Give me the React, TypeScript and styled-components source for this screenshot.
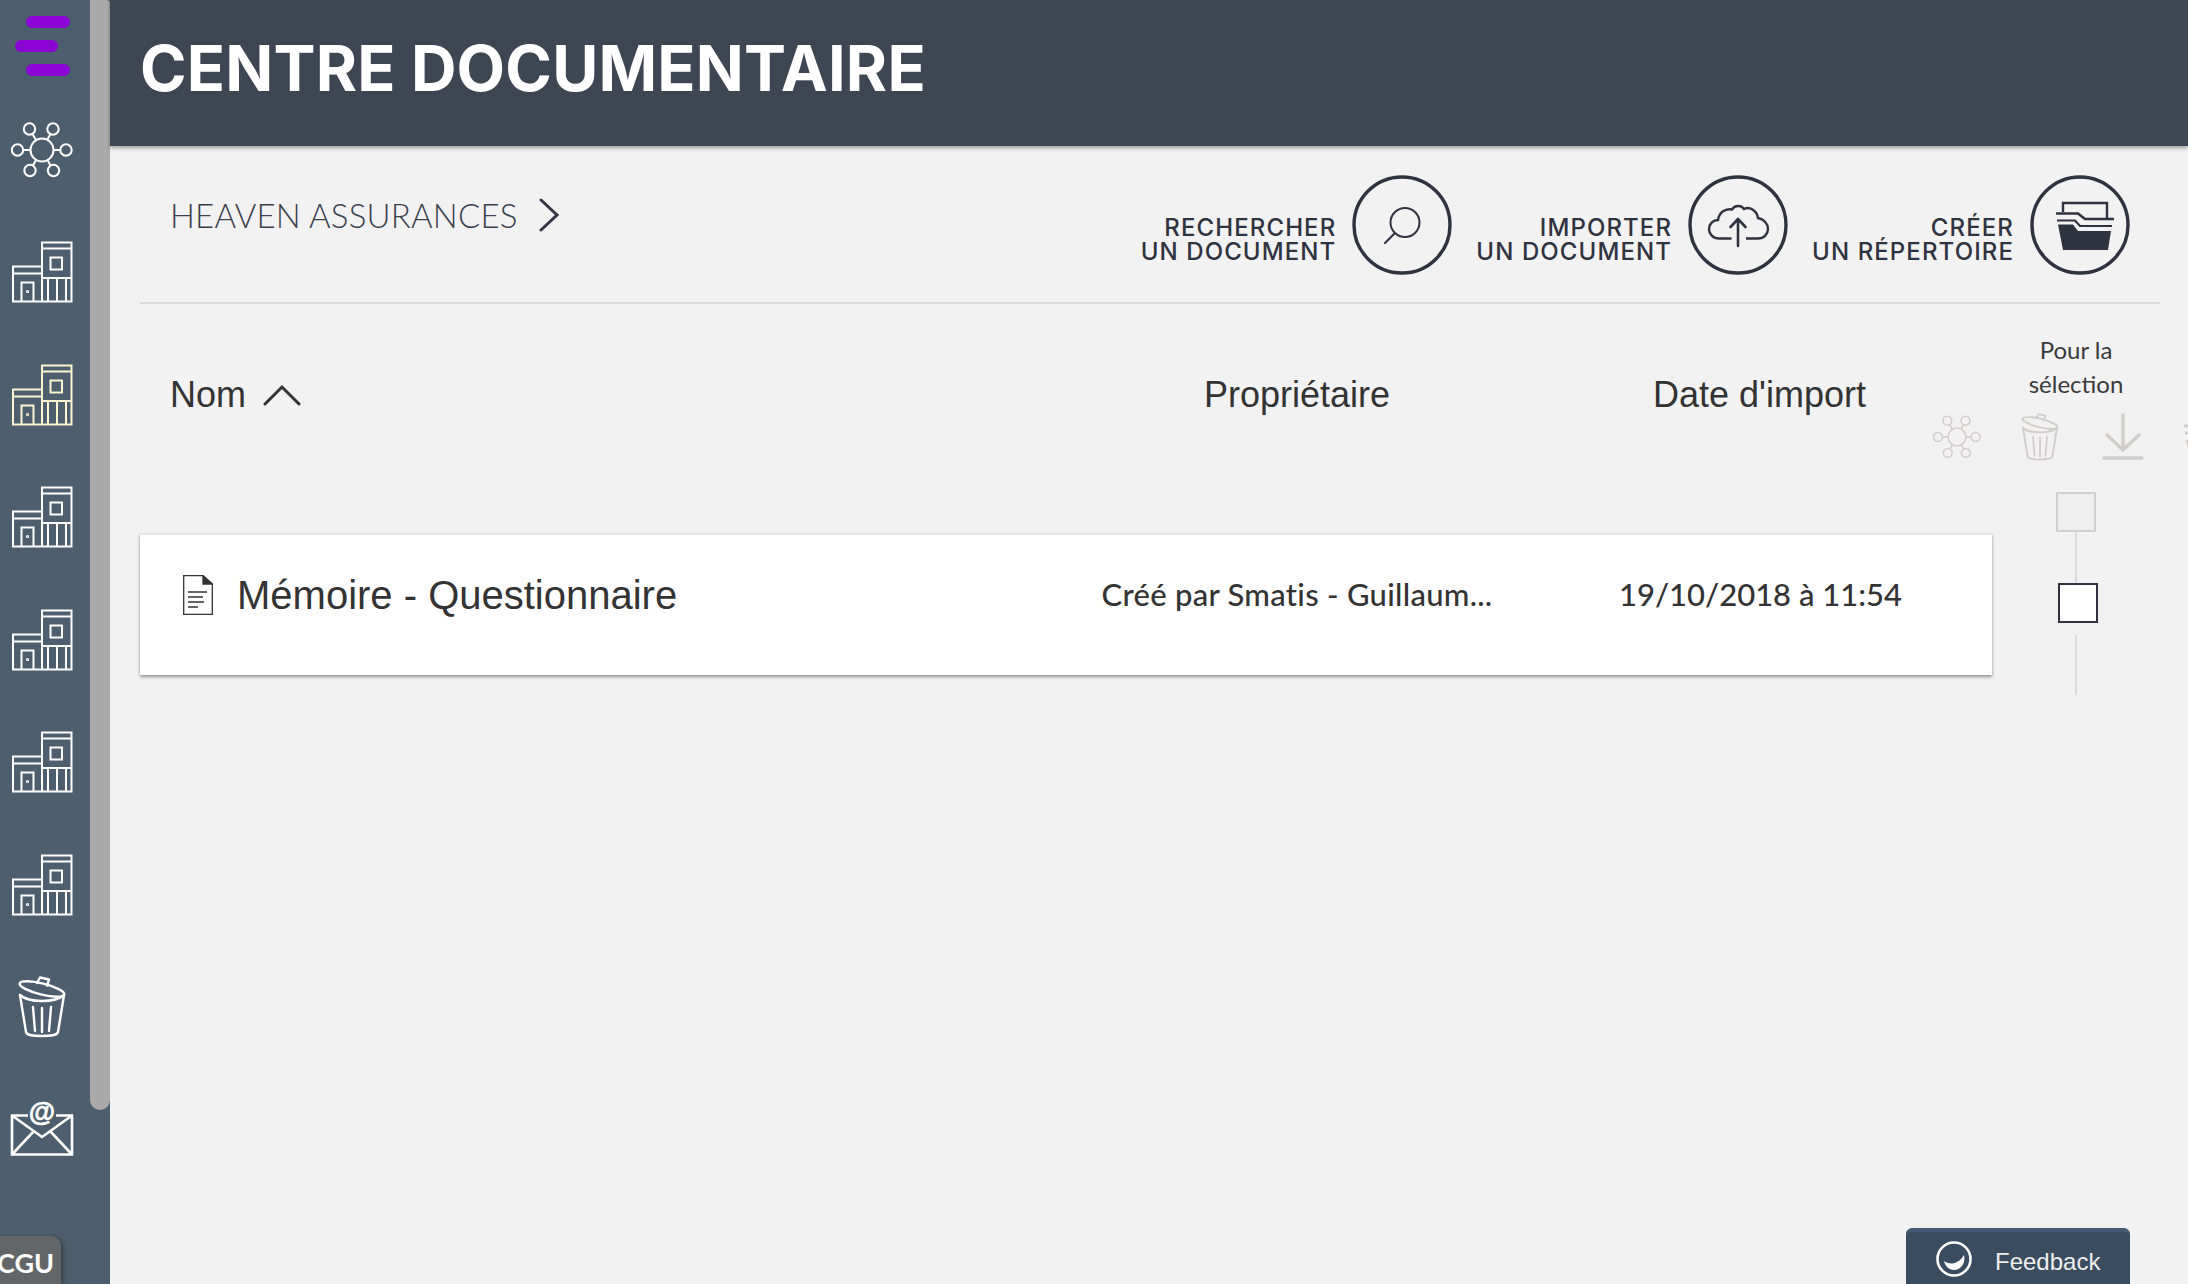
import React from "react";
import styled, { createGlobalStyle } from "styled-components";

const Global = createGlobalStyle`
  html, body { margin: 0; padding: 0; height: 100%; background: #f2f2f2; overflow: hidden; }
  #root { height: 100%; }
`;

const Page = styled.div`
  position: relative;
  display: flex;
  width: 2188px;
  height: 1284px;
  overflow: hidden;
  background: #f2f2f2;
`;

const Sidebar = styled.aside`
  position: relative;
  flex: 0 0 110px;
  display: flex;
  background: #4d5f6e;
`;

const SideNav = styled.nav`
  flex: 0 0 90px;
  display: flex;
  flex-direction: column;
  padding-top: 15px;
`;

const Burger = styled.div`
  height: 73.5px;
  display: flex;
  align-items: flex-start;
`;

const NavItem = styled.div`
  flex: 0 0 122.5px;
  display: flex;
  align-items: center;
  justify-content: center;
  padding-right: 6px;
  box-sizing: border-box;
  color: ${(p: { $tint?: string }) => p.$tint || "#fff"};
`;

const Thumb = styled.div`
  flex: 0 0 20px;
  height: 1110px;
  background: #aaaaaa;
  border-radius: 0 4px 10px 10px;
`;

const CguTab = styled.div`
  position: absolute;
  left: 0;
  bottom: 0;
  width: 61px;
  height: 48px;
  background: #636669;
  border-radius: 0 10px 0 0;
  box-shadow: 2px 1px 5px rgba(0, 0, 0, 0.35);
  color: #fff;
  font: 700 27px/54px "Lato", "Liberation Sans", sans-serif;
  text-indent: -3px;
  overflow: hidden;
`;

const Main = styled.main`
  flex: 1;
  min-width: 0;
  display: flex;
  flex-direction: column;
`;

const Header = styled.header`
  flex: 0 0 146px;
  display: flex;
  align-items: center;
  padding: 0 0 10px 30px;
  box-sizing: border-box;
  background: #3e4553;
  box-shadow: 0 2px 4px rgba(0, 0, 0, 0.35);
  position: relative;
  z-index: 1;
`;

const Title = styled.h1`
  margin: 0;
  color: #fff;
  font: 700 63px/1 "Inter", "Liberation Sans", sans-serif;
  letter-spacing: 0.2px;
  white-space: nowrap;
`;

const Content = styled.div`
  flex: 1;
  display: flex;
  flex-direction: column;
  padding: 0 28px 0 30px;
`;

const Toolbar = styled.div`
  flex: 0 0 158px;
  display: flex;
  align-items: flex-start;
  justify-content: space-between;
  padding: 29px 30px 0 30px;
  box-sizing: border-box;
  border-bottom: 2px solid #dcdcdc;
`;

const Breadcrumb = styled.div`
  display: flex;
  align-items: center;
  gap: 20px;
  height: 80px;
  color: #3a3f4c;
  font: 300 33px/1 "Lato", "Liberation Sans", sans-serif;
  letter-spacing: 0.2px;
`;

const Actions = styled.div`
  display: flex;
  gap: 24px;
`;

const ActionItem = styled.div`
  display: flex;
  align-items: center;
  gap: 16px;
`;

const ActionLabel = styled.div`
  text-align: right;
  color: #2f3340;
  font: 500 24px/24px "Inter", "Liberation Sans", sans-serif;
  letter-spacing: 1.1px;
  white-space: nowrap;
  padding-top: 30px;
`;

const Circle = styled.div`
  width: 100px;
  height: 100px;
  color: #2f3340;
`;

const Body = styled.div`
  flex: 1;
  display: flex;
  min-height: 0;
`;

const Listing = styled.div`
  flex: 0 0 1852px;
  display: flex;
  flex-direction: column;
`;

const Columns = styled.div`
  display: grid;
  grid-template-columns: 927px 460px 465px;
  align-items: center;
`;

const HeadRow = styled(Columns)`
  height: 229px;
  padding-bottom: 48px;
  box-sizing: border-box;
  color: #333;
  font: 400 36px/1 "Liberation Sans", Arial, sans-serif;
`;

const NameHead = styled.div`
  display: flex;
  align-items: center;
  gap: 17px;
  padding-left: 30px;
`;

const CenterHead = styled.div`
  text-align: center;
`;

const Row = styled(Columns)`
  height: 142px;
  padding-bottom: 21px;
  box-sizing: border-box;
  background: #fff;
  border-top: 2px solid #e6e6e6;
  box-shadow: 0 2px 3px rgba(0, 0, 0, 0.4);
`;

const NameCell = styled.div`
  display: flex;
  align-items: center;
  gap: 24px;
  padding-left: 43px;
  color: #333;
  font: 400 40px/1 "Liberation Sans", Arial, sans-serif;
`;

const MetaCell = styled.div<{ $track?: number; $shift?: number }>`
  text-align: center;
  color: #333;
  font: 500 31px/1 "Lato", "Liberation Sans", sans-serif;
  letter-spacing: ${(p) => p.$track ?? 0}px;
  padding-left: ${(p) => p.$shift ?? 0}px;
  white-space: nowrap;
`;

const Selection = styled.div`
  flex: 0 0 168px;
  display: flex;
  flex-direction: column;
  align-items: center;
`;

const SelectionTitle = styled.div`
  height: 100px;
  padding-top: 29px;
  box-sizing: content-box;
  text-align: center;
  color: #3a3a3a;
  font: 400 24px/34px "Lato", "Liberation Sans", sans-serif;
`;

const BulkIcons = styled.div`
  display: flex;
  justify-content: center;
  gap: 35px;
  width: 168px;
  padding-left: 10px;
  box-sizing: border-box;
  color: #d2cdcd;
  height: 56px;
  margin-top: -20px;
  flex-shrink: 0;
`;

const BulkIcon = styled.div`
  flex: 0 0 48px;
  height: 48px;
`;

const MasterBox = styled.div`
  width: 40px;
  height: 40px;
  box-sizing: border-box;
  margin-top: 23px;
  background: #eeeeee;
  border: 2px solid #cfcfcf;
`;

const Connector = styled.div`
  width: 2px;
  height: ${(p: { $h: number }) => p.$h}px;
  background: #dcdcdc;
`;

const RowBoxBand = styled.div`
  width: 108px;
  height: 52px;
  background: #f1f1f1;
  display: flex;
  justify-content: center;
  align-items: flex-start;
`;

const RowBox = styled.div`
  width: 40px;
  height: 40px;
  box-sizing: border-box;
  margin-left: 4px;
  background: #fff;
  border: 2px solid #2f3340;
`;

const Feedback = styled.div`
  position: absolute;
  left: 1906px;
  top: 1228px;
  width: 224px;
  height: 60px;
  box-sizing: border-box;
  display: flex;
  align-items: center;
  gap: 23px;
  padding: 0 0 2px 30px;
  background: #3a4d60;
  border-top: 4px solid #435a73;
  border-radius: 6px 6px 0 0;
  color: #eeeeee;
  font: 400 24px/1 "Liberation Sans", Arial, sans-serif;
`;

const FeedbackLabel = styled.span`
  padding-top: 6px;
`;

const Glyph = styled.svg`
  display: block;
  flex-shrink: 0;
`;

const MenuGlyph = () => (
  <Glyph width="90" height="62" viewBox="0 0 90 62">
    <g fill="#8b04d4">
      <rect x="26" y="1" width="44" height="12" rx="6" />
      <rect x="15" y="25" width="43" height="12" rx="6" />
      <rect x="26" y="49" width="44" height="12" rx="6" />
    </g>
  </Glyph>
);

const NetworkGlyph = ({ size = 62, w = 2 }: { size?: number; w?: number }) => (
  <Glyph width={size} height={size} viewBox="0 0 62 62" fill="none" stroke="currentColor" strokeWidth={w}>
    <circle cx="31" cy="31" r="11.5" />
    <circle cx="18.5" cy="10" r="5.7" />
    <circle cx="42" cy="10" r="5.7" />
    <circle cx="6.5" cy="31" r="5.7" />
    <circle cx="55" cy="31" r="5.7" />
    <circle cx="19" cy="51.5" r="5.7" />
    <circle cx="42.5" cy="51.5" r="5.7" />
    <path d="M21.5 15 L25 21 M39.5 15 L36 21 M12.5 31 H19.5 M49 31 H42.5 M22 46.5 L25 41 M39.5 46.5 L36.5 41" />
  </Glyph>
);

const BuildingGlyph = () => (
  <Glyph width="62" height="62" viewBox="0 0 62 62" fill="none" stroke="currentColor" strokeWidth="2">
    <path d="M31 60.5 V1.5 H60.5 V60.5 H2 V25.5 H31" />
    <path d="M2 32.5 H31 M31 7.5 H60.5 M31 37 H60.5" />
    <rect x="39.5" y="16.5" width="11.5" height="12" />
    <path d="M10.5 60.5 V41.5 H22.5 V60.5" />
    <path d="M37 37 V60.5 M46 37 V60.5 M55 37 V60.5" />
    <circle cx="16.5" cy="50.5" r="0.6" />
  </Glyph>
);

const TrashGlyph = ({ size = 62, w = 2.4 }: { size?: number; w?: number }) => (
  <Glyph width={size} height={size} viewBox="0 0 62 62" fill="none" stroke="currentColor" strokeWidth={w} strokeLinejoin="round" strokeLinecap="round">
    <ellipse cx="31" cy="13" rx="23" ry="5.5" transform="rotate(14 31 13)" />
    <path d="M26 7 L29 1.5 L38 3.5 L36 9.5" />
    <path d="M9 19 C18 27 44 27 53 19" />
    <path d="M9 19 L15 56 C16 59 20 60 31 60 C42 60 46 59 47 56 L53 19" />
    <path d="M22 31 L24 55 M31 32 V56 M40 31 L38 55" />
  </Glyph>
);

const MailGlyph = () => (
  <Glyph width="64" height="60" viewBox="0 0 64 60" fill="none" stroke="currentColor" strokeWidth="2.6">
    <path d="M18 15.5 H2 V54.5 H62 V15.5 H46" />
    <path d="M2 15.5 L32 37 L62 15.5 M2 54.5 L24 31 M62 54.5 L40 31" />
    <text x="32" y="21" fontSize="27" fontWeight="700" textAnchor="middle" fill="currentColor" stroke="currentColor" strokeWidth="0.6" fontFamily="Liberation Sans, sans-serif">@</text>
  </Glyph>
);

const SearchGlyph = () => (
  <Glyph width="100" height="100" viewBox="0 0 100 100" fill="none" stroke="currentColor">
    <circle cx="50" cy="50" r="48" strokeWidth="3.4" />
    <circle cx="53" cy="47.5" r="14.5" strokeWidth="2" />
    <path d="M42 59 L33 68" strokeWidth="2.2" strokeLinecap="round" />
  </Glyph>
);

const UploadGlyph = () => (
  <Glyph width="100" height="100" viewBox="0 0 100 100" fill="none" stroke="currentColor">
    <circle cx="50" cy="50" r="48" strokeWidth="3.4" />
    <path d="M43.5 63.5 H31 C25 63.5 21 59 21 54 C21 49 25 45 30 45 C31 38 37 33 44 34.5 C47 30 53 30 56 34 C62 31 69 36 70 43 C76 44 80 49 80 54 C80 59 76 63.5 70 63.5 H58" strokeWidth="2.4" />
    <path d="M50 71 V44 M42.5 52 L50 44 L57.5 52" strokeWidth="2.6" strokeLinecap="round" strokeLinejoin="round" />
  </Glyph>
);

const FolderGlyph = () => (
  <Glyph width="100" height="100" viewBox="0 0 100 100" fill="none" stroke="currentColor">
    <circle cx="50" cy="50" r="48" strokeWidth="3.4" />
    <path d="M33 37 V28 H77 V43" strokeWidth="2.4" />
    <path d="M26 38.5 H48 L55 44 H84" strokeWidth="2.6" />
    <path d="M27 45.5 H45 L50 51 H82" strokeWidth="2.2" />
    <path d="M28 49.5 H43 L48 56 H81 L78 75 H33 Z" fill="currentColor" stroke="none" />
  </Glyph>
);

const DocGlyph = () => (
  <Glyph width="30" height="40" viewBox="0 0 30 40" fill="none" stroke="#333" strokeWidth="1.3">
    <path d="M20 0.7 H0.7 V39.3 H29.3 V9 Z" />
    <path d="M20 0.7 L29.3 9 H20 Z" fill="#333" />
    <path d="M5 17 H24 M5 22 H20 M5 27 H21 M5 32 H15" />
  </Glyph>
);

const ChevronRight = () => (
  <Glyph width="22" height="34" viewBox="0 0 22 34" fill="none" stroke="#333642" strokeWidth="3" strokeLinecap="round">
    <path d="M3 2 L19 17 L3 32" />
  </Glyph>
);

const ChevronUp = () => (
  <Glyph width="38" height="22" viewBox="0 0 38 22" fill="none" stroke="#333" strokeWidth="3" strokeLinecap="round">
    <path d="M2 20 L19 3 L36 20" />
  </Glyph>
);

const DownloadGlyph = () => (
  <Glyph width="48" height="48" viewBox="0 0 48 48" fill="none" stroke="currentColor" strokeWidth="3.4" strokeLinecap="round">
    <path d="M24 2 V37 M8 22 L24 37 L40 22" />
    <path d="M5 45 H43" />
  </Glyph>
);

const StackGlyph = () => (
  <Glyph width="48" height="48" viewBox="0 0 48 48" fill="none" stroke="currentColor" strokeWidth="3">
    <path d="M2 13 H40 M3 20 H36 M5 27 L11 46 H32 L37 27" />
  </Glyph>
);

const SmileGlyph = () => (
  <Glyph width="36" height="36" viewBox="0 0 36 36" fill="none">
    <circle cx="18" cy="18" r="16.5" stroke="#fff" strokeWidth="2.6" />
    <path d="M8 20 C13 24 22 24 28 14 C30 22 25 29 18 29 C13 29 9 25 8 20 Z" fill="#fff" />
  </Glyph>
);

const buildings = ["#fff", "#fbf5d0", "#fff", "#fff", "#fff", "#fff"];

const actions = [
  { a: "RECHERCHER", b: "UN DOCUMENT", icon: <SearchGlyph /> },
  { a: "IMPORTER", b: "UN DOCUMENT", icon: <UploadGlyph /> },
  { a: "CRÉER", b: "UN RÉPERTOIRE", icon: <FolderGlyph /> },
];

export default function App() {
  return (
    <Page>
      <Global />
      <Sidebar>
        <SideNav>
          <Burger>
            <MenuGlyph />
          </Burger>
          <NavItem>
            <NetworkGlyph />
          </NavItem>
          {buildings.map((c, i) => (
            <NavItem key={i} $tint={c}>
              <BuildingGlyph />
            </NavItem>
          ))}
          <NavItem>
            <TrashGlyph />
          </NavItem>
          <NavItem>
            <MailGlyph />
          </NavItem>
        </SideNav>
        <Thumb />
        <CguTab>CGU</CguTab>
      </Sidebar>
      <Main>
        <Header>
          <Title>CENTRE DOCUMENTAIRE</Title>
        </Header>
        <Content>
          <Toolbar>
            <Breadcrumb>
              HEAVEN ASSURANCES
              <ChevronRight />
            </Breadcrumb>
            <Actions>
              {actions.map((x) => (
                <ActionItem key={x.a}>
                  <ActionLabel>
                    {x.a}
                    <br />
                    {x.b}
                  </ActionLabel>
                  <Circle>{x.icon}</Circle>
                </ActionItem>
              ))}
            </Actions>
          </Toolbar>
          <Body>
            <Listing>
              <HeadRow>
                <NameHead>
                  Nom
                  <ChevronUp />
                </NameHead>
                <CenterHead>Propriétaire</CenterHead>
                <CenterHead>Date d'import</CenterHead>
              </HeadRow>
              <Row>
                <NameCell>
                  <DocGlyph />
                  Mémoire - Questionnaire
                </NameCell>
                <MetaCell $track={0.28}>Créé par Smatis - Guillaum...</MetaCell>
                <MetaCell $shift={2}>19/10/2018 à 11:54</MetaCell>
              </Row>
            </Listing>
            <Selection>
              <SelectionTitle>
                Pour la
                <br />
                sélection
              </SelectionTitle>
              <BulkIcons>
                <BulkIcon>
                  <NetworkGlyph size={48} w={2} />
                </BulkIcon>
                <BulkIcon>
                  <TrashGlyph size={48} w={2.4} />
                </BulkIcon>
                <BulkIcon>
                  <DownloadGlyph />
                </BulkIcon>
                <BulkIcon>
                  <StackGlyph />
                </BulkIcon>
              </BulkIcons>
              <MasterBox />
              <Connector $h={51} />
              <RowBoxBand>
                <RowBox />
              </RowBoxBand>
              <Connector $h={60} />
            </Selection>
          </Body>
        </Content>
      </Main>
      <Feedback>
        <SmileGlyph />
        <FeedbackLabel>Feedback</FeedbackLabel>
      </Feedback>
    </Page>
  );
}
